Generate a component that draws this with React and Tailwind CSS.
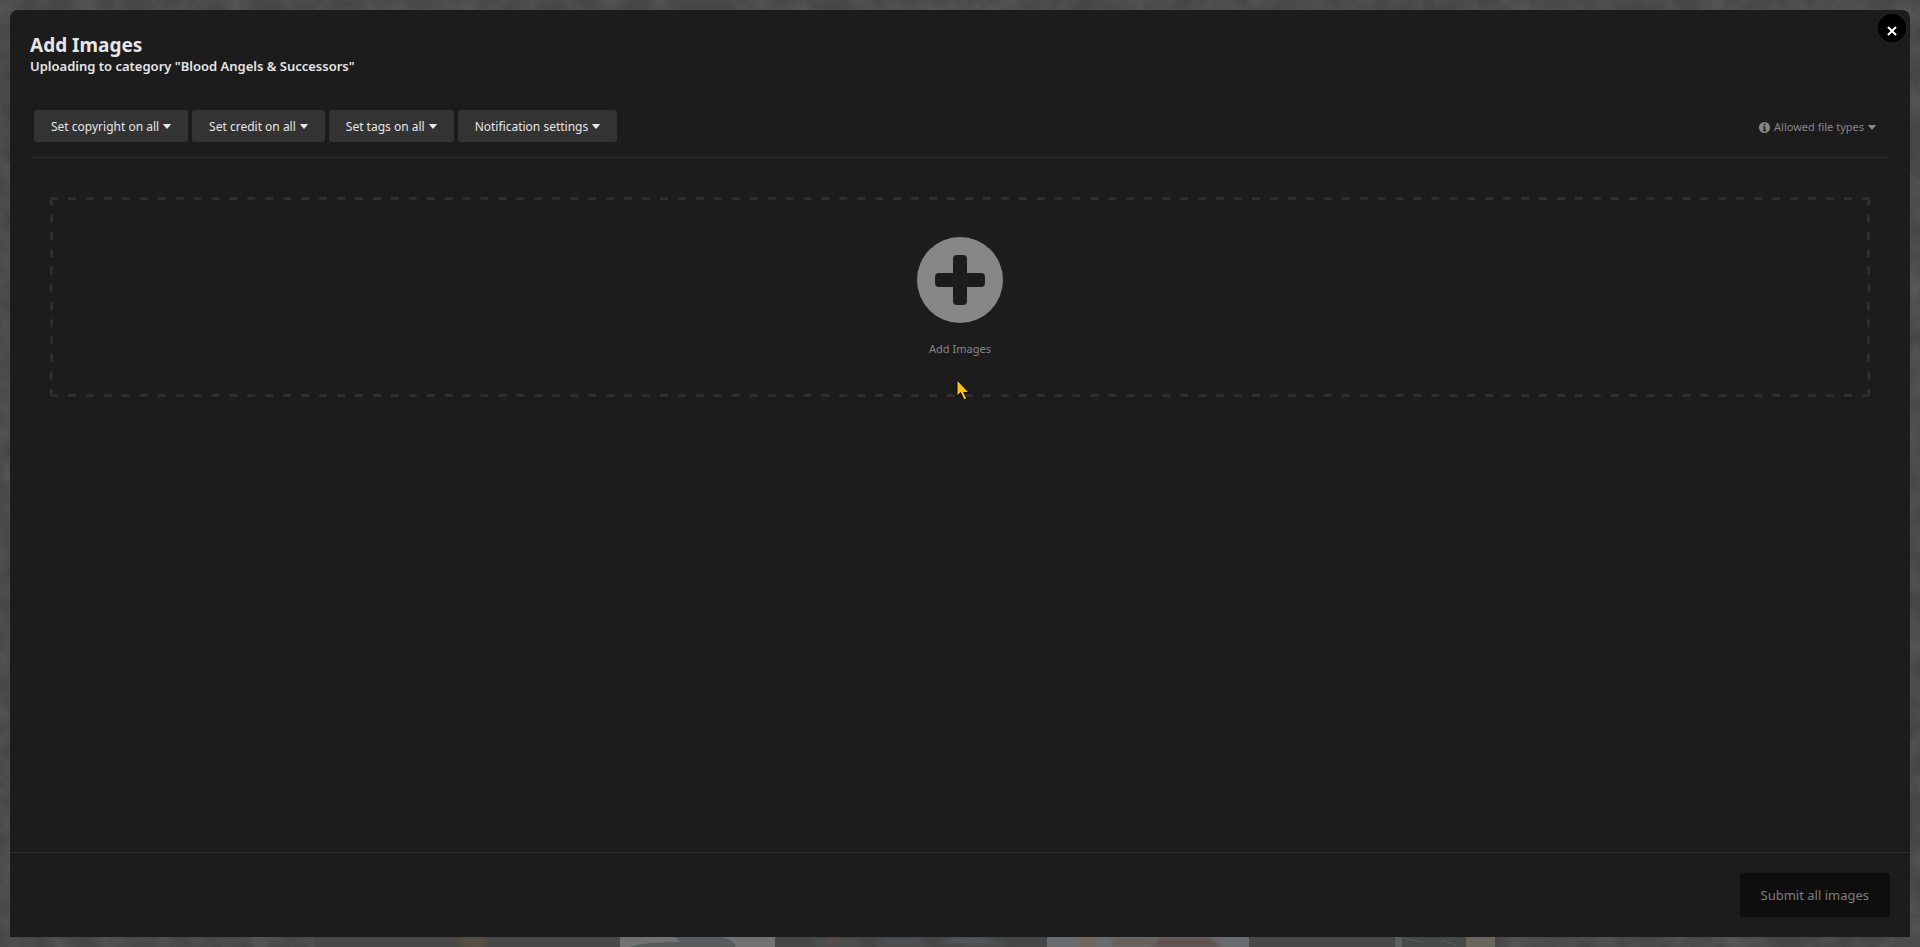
import React from 'react';

const bulkActions = [
  'Set copyright on all',
  'Set credit on all',
  'Set tags on all',
  'Notification settings',
];

function Caret() {
  return (
    <svg viewBox="0 0 8 5" className="inline-block shrink-0 w-2 h-[5px] ml-1" fill="currentColor" aria-hidden="true">
      <path d="M0.7 0h6.6q.7 0 .5.6L4.5 4.5q-.5.5-1 0L.2.6Q0 0 .7 0z" />
    </svg>
  );
}

// Page behind the dialog, only its edges stay visible
function Backdrop() {
  return (
    <svg className="absolute inset-0 w-full h-full" viewBox="0 0 1920 947" preserveAspectRatio="none" aria-hidden="true">
      <defs>
        <filter id="grain" x="0" y="0" width="100%" height="100%">
          <feTurbulence type="fractalNoise" baseFrequency="0.04" numOctaves="4" seed="4" />
          <feColorMatrix values="0 0 0 0 0.5  0 0 0 0 0.5  0 0 0 0 0.5  0.25 0 0 0 -0.08" />
        </filter>
        <filter id="soft">
          <feGaussianBlur stdDeviation="2" />
        </filter>
      </defs>
      <rect width="1920" height="947" fill="#464646" />
      <rect width="1920" height="947" filter="url(#grain)" />
      <rect x="315" y="937" width="305" height="10" fill="#494848" />
      <ellipse cx="473" cy="942" rx="14" ry="7" fill="#575043" filter="url(#soft)" />
      <rect x="620" y="937" width="155" height="10" fill="#727272" />
      <path d="M630 947q12-5 50-5l-4-5h46q12 3 14 10z" fill="#565b5b" />
      <rect x="775" y="937" width="272" height="10" fill="#464646" />
      <g filter="url(#soft)">
        <path d="M815 947v-8h42l8 8zM875 947l8-10h34l16 10zM960 947l10-6h30l10 6z" fill="#4c5050" />
        <path d="M830 936h6l4 10h-12z" fill="#5b4b4b" />
        <path d="M935 944l20-7h30l14 6z" fill="#555759" />
      </g>
      <rect x="1047" y="937" width="202" height="10" fill="#696c6e" />
      <g filter="url(#soft)">
        <path d="M1080 937h17v10h-22z" fill="#6f665f" />
        <path d="M1112 938h40v8h-40z" fill="#665f58" />
        <path d="M1150 947l10-9h50l12 9z" fill="#604d4c" />
      </g>
      <rect x="1249" y="937" width="146" height="10" fill="#484848" />
      <rect x="1395" y="937" width="100" height="10" fill="#5d605e" />
      <rect x="1402" y="937" width="64" height="10" fill="#464a48" />
      <path d="M1404 938l18 4M1442 940l14 5" stroke="#585c59" strokeWidth="1" />
      <rect x="1466" y="937" width="29" height="10" fill="#69665f" />
    </svg>
  );
}

// Wide-spaced dashes, half of each stroke is cut off at the box edge
function DashedFrame() {
  return (
    <svg className="absolute inset-0 w-full h-full rounded-[3px]" stroke="#2e2e2e" strokeWidth="6" aria-hidden="true">
      <line x1="0" y1="0" x2="100%" y2="0" strokeDasharray="8 9.94" />
      <line x1="0" y1="100%" x2="100%" y2="100%" strokeDasharray="8 9.94" />
      <line x1="0" y1="0" x2="0" y2="100%" strokeDasharray="8 9.45" />
      <line x1="100%" y1="0" x2="100%" y2="100%" strokeDasharray="8 9.45" />
    </svg>
  );
}

function Pointer() {
  return (
    <svg viewBox="0 0 14 22" className="absolute left-1/2 -bottom-1 -ml-1 w-[14px] h-[22px]" aria-hidden="true">
      <path d="M1 1v16l3.6-3.4L8 21l2.8-1.4-3-6H13z" fill="#fcc21b" stroke="#0a0a0a" strokeWidth="1" />
    </svg>
  );
}

export default function App() {
  return (
    <div className="relative flex min-h-screen p-2.5 bg-[#464646] font-['Noto_Sans',sans-serif] text-[#e6e6e6]">
      <Backdrop />

      <div role="dialog" aria-labelledby="dialog-title" className="relative flex flex-col flex-1 bg-[#1c1c1c] rounded-t-lg">
        <button
          type="button"
          aria-label="Close"
          className="absolute top-1 right-1 flex items-center justify-center w-7 h-7 pt-1.5 rounded-full bg-black text-white"
        >
          <svg viewBox="0 0 10 10" className="w-2.5 h-2.5" stroke="currentColor" strokeWidth="2" aria-hidden="true">
            <path d="M1 1l8 8M9 1L1 9" />
          </svg>
        </button>

        <header className="px-5 pt-[22px]">
          <h1 id="dialog-title" className="text-[19px] leading-[26px] font-bold">Add Images</h1>
          <h2 className="text-[13px] leading-4 font-semibold">Uploading to category "Blood Angels &amp; Successors"</h2>
        </header>

        <main className="flex-1 px-5 pt-9">
          <div className="flex items-center justify-between h-[48px] pb-4 pl-1 pr-[14px] border-b border-[#2b2b2b]">
            <div className="flex gap-1">
              {bulkActions.map((label) => (
                <button
                  key={label}
                  type="button"
                  className="flex items-center h-8 px-[17px] pt-0.5 rounded-[3px] bg-[#333333] text-[12px] whitespace-nowrap"
                >
                  {label}
                  <Caret />
                </button>
              ))}
            </div>
            <button type="button" className="flex items-center pt-1 text-[11px] text-[#878787]">
              <svg viewBox="0 0 10 10" className="w-[11px] h-[11px] mr-1" aria-hidden="true">
                <circle cx="5" cy="5" r="5" fill="currentColor" />
                <path d="M4.2 1.5h1.6v1.4H4.2zM3.6 4h2.2v3.2h.7v1.1H3.6V7.2h.6V5.1h-.6z" fill="#1c1c1c" />
              </svg>
              Allowed file types
              <Caret />
            </button>
          </div>

          <div className="relative mx-5 mt-[39px]">
            <DashedFrame />
            <button type="button" className="flex flex-col items-center w-full h-[200px] pt-10 text-[#878787]">
              <svg viewBox="0 0 86 86" className="w-[86px] h-[86px]" aria-hidden="true">
                <circle cx="43" cy="43" r="43" fill="currentColor" />
                <path
                  d="M40 18h6q4 0 4 4v14h14q4 0 4 4v6q0 4-4 4H50v14q0 4-4 4h-6q-4 0-4-4V50H22q-4 0-4-4v-6q0-4 4-4h14V22q0-4 4-4z"
                  fill="#1c1c1c"
                />
              </svg>
              <span className="mt-4 text-[11px] leading-5">Add Images</span>
            </button>
            <Pointer />
          </div>
        </main>

        <footer className="flex justify-end p-5 border-t border-[#2b2b2b]">
          <button type="button" disabled className="h-11 px-[21px] pt-0.5 rounded-[3px] bg-[#0e0e0e] text-[13px] text-[#7d7d7d]">
            Submit all images
          </button>
        </footer>
      </div>
    </div>
  );
}
